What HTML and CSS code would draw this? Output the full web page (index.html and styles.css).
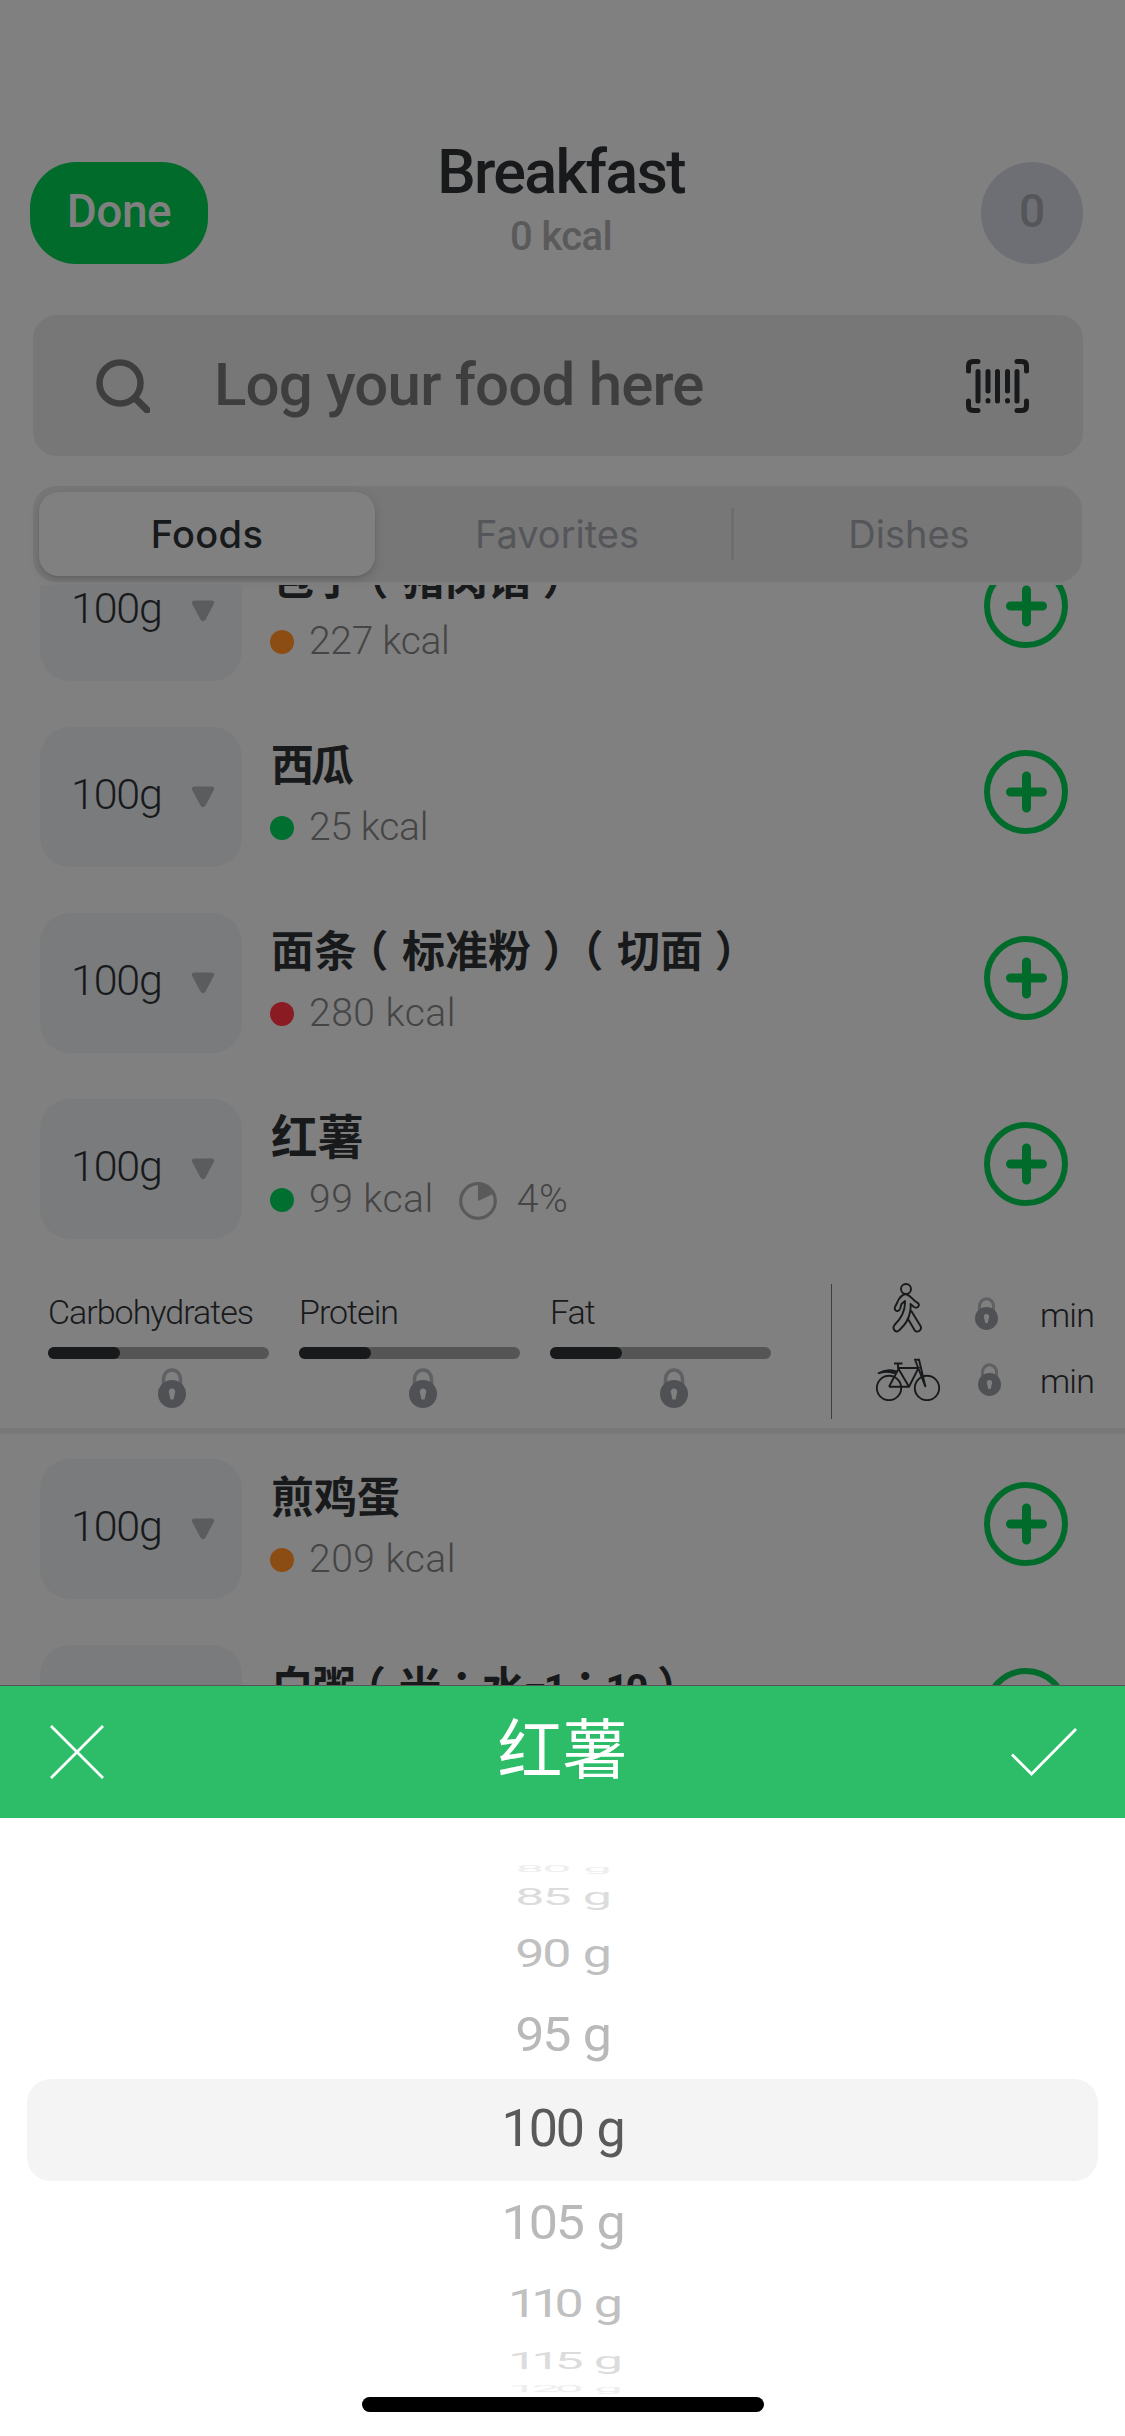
FILE: index.html
```html
<!DOCTYPE html>
<html lang="zh-CN">
<head>
<meta charset="utf-8">
<title>Breakfast</title>
<link rel="stylesheet" href="styles.css">
</head>
<body>
<svg class="defs" aria-hidden="true">
  <symbol id="add" viewBox="0 0 84 84"><circle cx="42" cy="42" r="39" fill="none" stroke="currentColor" stroke-width="6"/><path d="M26.500 42H58.500M42.500 26V58" stroke="currentColor" stroke-width="9" stroke-linecap="round"/></symbol>
  <symbol id="down" viewBox="0 0 24 22"><path d="M3.500 .5H20.500Q24 .5 22.800 4L14.500 19.500Q12 23 9.500 19.500L1.200 4Q0 .5 3.500 .5Z" fill="currentColor"/></symbol>
  <symbol id="lock" viewBox="0 0 28 40"><path d="M5.500 18V11a8.500 9 0 0 1 17 0V18" fill="none" stroke="#5f6063" stroke-width="3.600"/><path fill="#505154" fill-rule="evenodd" d="M14 12A14 14 0 1 1 14 40A14 14 0 1 1 14 12ZM14 20.500a3.200 3.200 0 0 0-3 4.500L12.500 31.500H15.500L17 25a3.200 3.200 0 0 0-3-4.500Z"/></symbol>
</svg>
<div class="screen">
  <header class="top">
    <div class="done">Done</div>
    <div class="heading"><h1>Breakfast</h1><p>0 kcal</p></div>
    <div class="count">0</div>
  </header>
  <div class="search">
    <svg class="glass" viewBox="0 0 54 54"><circle cx="24" cy="24" r="20.500" fill="none" stroke="currentColor" stroke-width="6.500"/><path d="M39 39L51 51" stroke="currentColor" stroke-width="7" stroke-linecap="round"/></svg>
    <span class="placeholder">Log your food here</span>
    <svg class="barcode" viewBox="0 0 63 54" fill="none" stroke="#17191b" stroke-width="5" stroke-linecap="round" stroke-linejoin="round"><path d="M2.500 12V7Q2.500 2.500 7 2.500H12M51 2.500H56Q60.500 2.500 60.500 7V12M60.500 42V47Q60.500 51.500 56 51.500H51M12 51.500H7Q2.500 51.500 2.500 47V42"/><path d="M12 12.500V42M22 12.500V32M31.500 12.500V42M41.500 12.500V32M51 12.500V42M22 41.500V42M41.500 41.500V42"/></svg>
  </div>
  <nav class="tabs">
    <div class="tab active">Foods</div>
    <div class="tab">Favorites</div>
    <div class="tab last">Dishes</div>
  </nav>
  <main class="list">
    <div class="row first">
      <div class="qty"><span>100g</span><svg><use href="#down"/></svg></div>
      <div class="info"><h2>包子<i class="paren">（</i>猪肉馅<i class="paren end">）</i></h2><p><b class="dot orange"></b>227 kcal</p></div>
      <svg class="add"><use href="#add"/></svg>
    </div>
    <div class="row">
      <div class="qty"><span>100g</span><svg><use href="#down"/></svg></div>
      <div class="info"><h2 class="tight">西瓜</h2><p><b class="dot green"></b>25 kcal</p></div>
      <svg class="add"><use href="#add"/></svg>
    </div>
    <div class="row">
      <div class="qty"><span>100g</span><svg><use href="#down"/></svg></div>
      <div class="info"><h2>面条<i class="paren">（</i>标准粉<i class="paren end">）</i><i class="paren">（</i>切面<i class="paren end">）</i></h2><p class="loose"><b class="dot red"></b>280 kcal</p></div>
      <svg class="add"><use href="#add"/></svg>
    </div>
    <div class="row open">
      <div class="qty"><span>100g</span><svg><use href="#down"/></svg></div>
      <div class="info"><h2 class="wide">红薯</h2><p class="loose"><b class="dot green"></b>99 kcal<svg class="pie" viewBox="0 0 38 38"><circle cx="19" cy="19" r="17.300" fill="none" stroke="#5a5a5a" stroke-width="3.200"/><path d="M19 19V3A16 16 0 0 1 34 12Z" fill="#5a5a5a"/></svg>4%</p></div>
      <svg class="add"><use href="#add"/></svg>
    </div>
    <section class="detail">
      <div class="macro"><span>Carbohydrates</span><div class="bar"><div></div></div><svg class="lock"><use href="#lock"/></svg></div>
      <div class="macro"><span>Protein</span><div class="bar"><div></div></div><svg class="lock"><use href="#lock"/></svg></div>
      <div class="macro"><span>Fat</span><div class="bar"><div></div></div><svg class="lock"><use href="#lock"/></svg></div>
      <div class="burn">
        <div class="activity">
          <svg class="walk" viewBox="0 0 30 50" fill="none" stroke="#17191b" stroke-width="1.900" stroke-linejoin="round"><circle cx="14" cy="6" r="5"/><path d="M14 11C9 12 7 15 5.500 19L3 24C1.500 28 6.500 29.500 8 26L9.500 21L13 18C13.500 28 9.500 35 2.500 42C-.5 46 4.500 51 7.500 47C13 42 17 36 18 29C18.500 26 19 24 18.500 21L22 24C26 26.500 29 21 25 19.500C21 17.500 19.500 13 14 11Z"/><path d="M15.500 35L22.500 47C25 51 30.500 47 28.500 43L19 27.500"/></svg>
          <svg class="minilock"><use href="#lock"/></svg><span>min</span>
        </div>
        <div class="activity">
          <svg class="bike" viewBox="0 0 64 43" fill="none" stroke="#17191b" stroke-width="1.900"><circle cx="13" cy="30" r="12.200"/><circle cx="51" cy="30" r="12.200"/><path d="M13 28.800H33L42.500 10H23L13 28.800M22 5V10L33 28.800M18 5.500H26.500"/><path d="M38 1.800H43L49.500 29L39.500 3"/><path d="M2 15.500Q11 10 20 13.500L18 15Q9 12.500 2 15.500Z" fill="#17191b"/></svg>
          <svg class="minilock second"><use href="#lock"/></svg><span>min</span>
        </div>
      </div>
    </section>
    <div class="row">
      <div class="qty"><span>100g</span><svg><use href="#down"/></svg></div>
      <div class="info"><h2>煎鸡蛋</h2><p class="loose"><b class="dot orange"></b>209 kcal</p></div>
      <svg class="add"><use href="#add"/></svg>
    </div>
    <div class="row">
      <div class="qty"><span>100g</span><svg><use href="#down"/></svg></div>
      <div class="info"><h2 class="ratio">白粥<i class="paren">（</i>米<i class="colon" lang="zh-TW">：</i>水<i class="latin">=1</i><i class="colon" lang="zh-TW">：</i><i class="latin">10</i><i class="paren end">）</i></h2></div>
      <svg class="add"><use href="#add"/></svg>
    </div>
  </main>
  <section class="sheet">
    <div class="sheet-bar">
      <svg class="close" viewBox="0 0 54 54"><path d="M1 1L53 53M53 1L1 53" stroke="#fff" stroke-width="2.800"/></svg>
      <h3>红薯</h3>
      <svg class="check" viewBox="0 0 66 48"><path d="M1 26.500L20.500 46L65 1" fill="none" stroke="#fff" stroke-width="2.800"/></svg>
    </div>
    <div class="picker">
      <div class="opt far"><span>80 g</span></div>
      <div class="opt third"><span>85 g</span></div>
      <div class="opt second-off"><span>90 g</span></div>
      <div class="opt near"><span>95 g</span></div>
      <div class="opt selected"><span>100 g</span></div>
      <div class="opt near"><span>105 g</span></div>
      <div class="opt second-off ones"><span>110 g</span></div>
      <div class="opt third ones"><span>115 g</span></div>
      <div class="opt far ones"><span>120 g</span></div>
    </div>
    <div class="home"></div>
  </section>
</div>
</body>
</html>
```
FILE: styles.css
```css
* { box-sizing: border-box; margin: 0; padding: 0; }
body { background: #808080; font-family: Roboto, "Noto Sans CJK SC", sans-serif; color: #17191b; }
.defs { display: none; }
svg { flex: none; }
.screen { width: 1125px; height: 2436px; overflow: hidden; display: flex; flex-direction: column; background: #808080; }

.top { height: 315px; padding: 138px 42px 0 30px; display: grid; grid-template-columns: 178px 1fr 102px; }
.done, .count { height: 102px; margin-top: 24px; line-height: 99px; text-align: center; font-size: 46px; font-weight: 500; }
.done { background: #006b2b; color: #808080; border-radius: 46px; letter-spacing: -.5px; }
.count { background: #6d6f74; color: #55565a; border-radius: 50%; }
.heading { text-align: center; padding-right: 67px; padding-top: 1px; }
h1 { font-size: 61px; line-height: 66px; font-weight: 500; letter-spacing: -1.700px; }
.heading p { font-size: 40px; line-height: 64px; font-weight: 500; color: #5a5a5a; letter-spacing: -.6px; }

.search { height: 141px; flex: none; margin: 0 42px 0 33px; border-radius: 24px; background: #777; padding: 0 54px 0 63px; display: flex; align-items: center; color: #3e3e3e; }
.glass { width: 54px; height: 54px; }
.placeholder { flex: 1; padding-left: 64px; font-size: 60px; font-weight: 500; letter-spacing: -.8px; line-height: 135px; padding-bottom: 2px; }
.barcode { width: 63px; height: 54px; }

.tabs { height: 96px; flex: none; margin: 30px 43px 3px 33px; padding: 6px; border-radius: 24px; background: #777; display: grid; grid-template-columns: 336px 1fr 345px; align-items: center; font: 500 38px/84px Inter, sans-serif; text-align: center; color: #55565a; }
.tab { font-weight: 400; padding-left: 8px; }
.tab.active { height: 84px; padding: 0; border-radius: 20px; background: #808080; color: #17191b; font-weight: 500; letter-spacing: .3px; box-shadow: 0 4px 12px rgba(0,0,0,.12), 0 2px 3px rgba(0,0,0,.08); }
.tab.last { border-left: 3px solid #6d6e70; line-height: 52px; }

.list { height: 1100px; flex: none; overflow: hidden; }
.row { height: 140px; margin-bottom: 46px; padding: 0 57px 0 40px; display: flex; }
.row.first { margin-top: -44px; }
.row.open { margin-bottom: 0; }
.qty { width: 202px; height: 140px; border-radius: 30px; background: #797b7d; display: flex; align-items: center; padding: 0 27px 6px 31px; justify-content: space-between; font-size: 43px; font-weight: 300; letter-spacing: -1.200px; }
.qty svg { width: 24px; height: 22px; color: #5b5c5e; margin-top: 5px; }
.info { flex: 1; padding: 8px 0 0 28px; }
h2 { font: 700 43px/62px Roboto, "Noto Sans CJK SC", sans-serif; height: 61px; padding-left: 1px; white-space: nowrap; text-spacing-trim: space-all; }
h2 i { font-style: normal; }
.tight { letter-spacing: -3px; }
.wide { font-size: 46.500px; }
.paren { margin: 0 13.500px 0 10px; font-feature-settings: "halt"; }
.paren.end { margin: 0 8px 0 11.500px; }
.colon { font-family: "Noto Sans CJK TC"; }
.ratio { letter-spacing: -1.200px; }
.latin { font-size: 40px; letter-spacing: -3px; }
.info p { height: 62px; display: flex; align-items: center; font-size: 39px; font-weight: 300; letter-spacing: -.3px; color: #454545; white-space: pre; }
.info .loose { letter-spacing: .5px; }
.dot { width: 24px; height: 24px; border-radius: 50%; margin: 2px 15px 0 0; }
.orange { background: #8c4d14; }
.green { background: #006f30; }
.red { background: #8b1b22; }
.pie { width: 38px; height: 38px; margin: 3px 20px 0 25px; }
.add { width: 84px; height: 84px; margin-top: 23px; color: #006b2b; }

.detail { height: 195px; margin-bottom: 25px; padding: 0 22px 0 48px; border-bottom: 6px solid #787878; display: flex; }
.macro { width: 221px; margin-right: 30px; padding-top: 53px; display: flex; flex-direction: column; font-size: 34px; line-height: 40px; font-weight: 300; letter-spacing: -1px; }
.bar { height: 12px; flex: none; margin-top: 15px; border-radius: 6px; background: #555; }
.bar div { width: 72px; height: 12px; border-radius: 6px; background: #17191b; }
.lock { width: 28px; height: 40px; margin: 9px 0 0 110px; }
.burn { flex: 1; margin: 45px 0 9px 30px; border-left: 1.500px solid #3f3f3f; }
.activity { height: 66px; display: grid; grid-template-columns: 84px 64px 1fr; justify-content: start; padding-left: 34px; font-size: 34px; font-weight: 300; line-height: 62px; letter-spacing: -.8px; }
.walk { width: 30px; height: 50px; margin: -1px 0 0 26px; }
.bike { width: 64px; height: 43px; margin: 8px 0 0 10px; }
.minilock { width: 23px; height: 33px; margin: 13px 0 0 25px; }
.minilock.second { margin-left: 28px; }
.activity span { padding-left: 26px; }

.sheet { height: 751px; flex: none; border-top: 1px solid #555; background: #fff; display: flex; flex-direction: column; align-items: center; }
.sheet-bar { width: 1125px; height: 132px; flex: none; background: #2dbd69; padding: 0 48px 0 50px; display: flex; align-items: center; justify-content: space-between; color: #fff; }
.sheet-bar h3 { font: 400 65px/132px "Noto Sans CJK SC", sans-serif; height: 132px; margin-top: -14px; padding-left: 10px; }
.close { width: 54px; height: 54px; }
.check { width: 66px; height: 48px; }
.picker { width: 1071px; margin-top: 42px; }
.opt { display: flex; align-items: center; justify-content: center; font-size: 52px; line-height: 52px; font-weight: 400; color: #b9b9b9; letter-spacing: -2.200px; word-spacing: 3px; }
.opt span { flex: none; }
.selected { height: 102px; margin: 1px 0 -1px; padding-bottom: 2px; border-radius: 24px; background: #f4f4f4; color: #5a5a5a; }
.near { height: 86px; }
.near span { transform: scaleY(.93); }
.second-off { height: 76px; color: #c0c0c0; }
.second-off span { transform: scaleY(.75); }
.third { height: 38px; color: #dcdcdc; }
.third span { transform: scaleY(.45); }
.far { height: 18px; color: #eee; }
.far span { transform: scaleY(.18); }
.ones { letter-spacing: -6px; word-spacing: 9px; }
.home { width: 402px; height: 15px; margin-top: -1px; border-radius: 8px; background: #000; }
```
